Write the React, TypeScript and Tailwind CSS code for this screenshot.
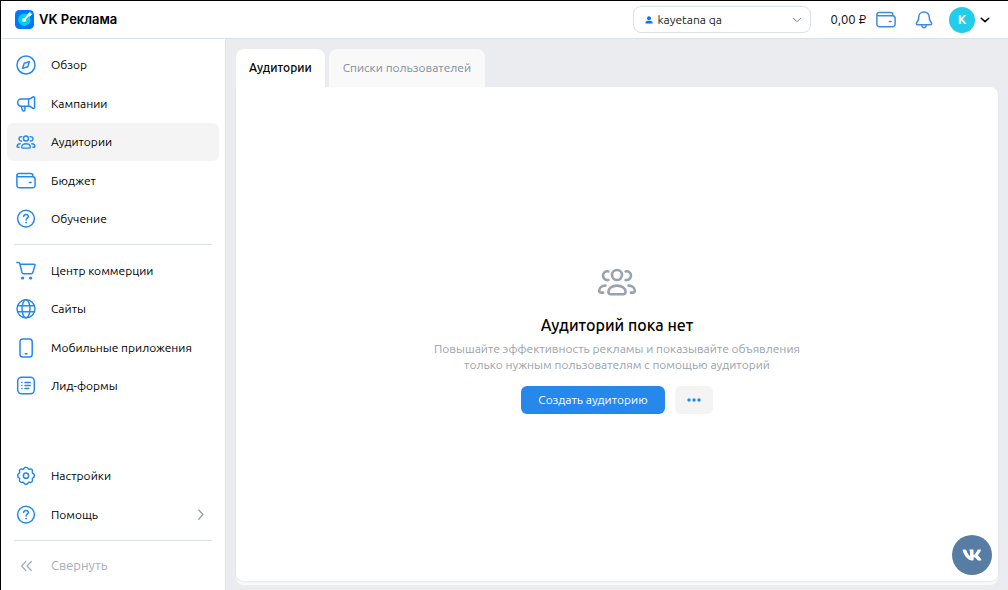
import type { ReactNode } from "react";
import { FaVk } from "react-icons/fa";

type IconProps = { className?: string; children?: ReactNode };

function Glyph({ className = "size-5 stroke-[1.5]", children }: IconProps) {
  return (
    <svg
      viewBox="0 0 20 20"
      className={className}
      fill="none"
      stroke="currentColor"
      strokeLinecap="round"
      strokeLinejoin="round"
      aria-hidden="true"
    >
      {children}
    </svg>
  );
}

const CompassIcon = () => (
  <Glyph>
    <circle cx="10" cy="10" r="9" />
    <path d="M13.4 6.6 11.8 11.8 6.6 13.4 8.2 8.2Z" />
  </Glyph>
);

const MegaphoneIcon = () => (
  <Glyph>
    <path d="M12.6 5H5.2a3.6 3.6 0 0 0 0 7.2h7.4Z" />
    <path d="M12.6 5c1.600 0 3-.9 4-1.900.6-.6 2-.2 2 .7v9.600c0 .9-1.400 1.300-2 .7-1-1-2.400-1.900-4-1.900" />
    <path d="M5.300 12.400l1 3.700a1.100 1.100 0 0 0 1.100.8h.5c.6 0 1-.5 1-1v-3.500" />
  </Glyph>
);

const UsersIcon = ({ className }: { className?: string }) => (
  <Glyph className={className}>
    <circle cx="10" cy="6.500" r="2.500" />
    <path d="M5.700 4.700c-1.500-.3-2.700.7-2.700 2.100s1.200 2.500 2.700 2.200M14.300 4.700c1.500-.3 2.700.7 2.700 2.100s-1.200 2.500-2.700 2.200" />
    <path d="M4.200 11.800c-1.900.1-3.100 1.200-3.100 2.600 0 .6.400.9 1 .9h1M15.800 11.800c1.900.1 3.100 1.200 3.100 2.600 0 .6-.4.9-1 .9h-1" />
    <path d="M10 11.800c-2.600 0-4.300 1.400-4.300 3.100 0 .8.400 1.200 1.200 1.200h6.200c.8 0 1.200-.4 1.200-1.200 0-1.700-1.700-3.100-4.300-3.100Z" />
  </Glyph>
);

const WalletIcon = () => (
  <Glyph>
    <path d="M.9 4.500v9.700a2.600 2.600 0 0 0 2.600 2.600h13a2.600 2.600 0 0 0 2.600-2.600V8.300a2.600 2.600 0 0 0-2.600-2.600H2.800A1.900 1.900 0 0 1 .9 4.200c0-1 .9-1.700 1.900-1.700h12c1.200 0 2 .8 2 1.900v1.100" />
    <path d="M13.300 11.400h1.800" />
  </Glyph>
);

const QuestionIcon = () => (
  <Glyph>
    <circle cx="10" cy="9.600" r="8.400" />
    <path d="M7.700 7.500c.1-1.300 1-2.100 2.300-2.100s2.300.8 2.300 2c0 1.800-2.200 1.800-2.200 3.600" />
    <circle cx="10.100" cy="13.600" r=".9" fill="currentColor" stroke="none" />
  </Glyph>
);

const CartIcon = () => (
  <Glyph>
    <path d="M.9 1.500h1.700c.6 0 1 .4 1.200 1l2.100 8.800c.2.900.9 1.500 1.800 1.500h7.400c.9 0 1.600-.6 1.800-1.400l2.100-7c.2-.7-.2-1.200-.9-1.200H4.100" />
    <circle cx="6.600" cy="17" r="1.600" fill="currentColor" stroke="none" />
    <circle cx="14.600" cy="17" r="1.600" fill="currentColor" stroke="none" />
  </Glyph>
);

const GlobeIcon = () => (
  <Glyph>
    <circle cx="10" cy="9.800" r="9" />
    <ellipse cx="10" cy="9.800" rx="4" ry="9" />
    <path d="M1.800 6.800h16.400M1.800 12.800h16.400" />
  </Glyph>
);

const PhoneIcon = () => (
  <Glyph>
    <rect x="4" y=".9" width="12.200" height="18.200" rx="2.800" />
    <path d="M9.200 15.800h1.800" />
  </Glyph>
);

const FormIcon = () => (
  <Glyph>
    <rect x="1.700" y="1.200" width="16.600" height="16.600" rx="4" />
    <path d="M5.800 6.500h.1M5.800 9.500h.1M5.800 12.500h.1M9 6.500h5.200M9 9.500h5.200M9 12.500h3.600" />
  </Glyph>
);

const GearIcon = () => (
  <Glyph>
    <path d="M8.100 2.300c.8-1.500 3-1.500 3.800 0 .4.800 1.100 1.100 2 .8 1.600-.5 3 .9 2.500 2.500-.3.900 0 1.600.8 2 1.500.8 1.500 3.300 0 4.100-.8.4-1.100 1.100-.8 2 .5 1.700-.9 3.100-2.500 2.600-.9-.3-1.600 0-2 .8-.8 1.500-3 1.500-3.800 0-.4-.8-1.100-1.100-2-.8-1.600.5-3-.9-2.500-2.600.3-.9 0-1.600-.8-2-1.500-.8-1.500-3.300 0-4.100.8-.4 1.100-1.100.8-2-.5-1.600.9-3 2.500-2.500.9.300 1.600 0 2-.8Z" />
    <circle cx="10" cy="9.700" r="2.600" />
  </Glyph>
);

const BellIcon = () => (
  <Glyph>
    <path d="M10 1.900c-3.200 0-5.200 2.300-5.200 5.200 0 2.500-.5 3.500-1.500 4.700-.6.700-1 1.200-1 1.800 0 .7.500 1.100 1.300 1.100h12.800c.8 0 1.300-.4 1.300-1.100 0-.6-.4-1.100-1-1.800-1-1.200-1.500-2.200-1.500-4.700 0-2.900-2-5.200-5.200-5.200Z" />
    <path d="M7.700 15.200c.2 1.600 1.100 2.500 2.300 2.500s2.100-.9 2.300-2.500" />
  </Glyph>
);

function Logo() {
  return (
    <svg viewBox="0 0 19 19" className="size-[19px]" aria-hidden="true">
      <rect width="19" height="19" rx="4.500" fill="#0077ff" />
      <circle cx="9.300" cy="9.700" r="6.200" fill="#00d3e6" />
      <path d="M9.400 9.600 13.800 4.800" stroke="#fff" strokeWidth="2" />
      <path d="M12.200 4.400 15.200 1.400 15.600 3.400 17.600 3.800 14.600 6.800Z" fill="#fff" />
      <circle cx="9.200" cy="9.900" r="2" fill="#fff" />
    </svg>
  );
}

function Chevron({ className }: { className: string }) {
  return (
    <svg viewBox="0 0 10 6" className={className} fill="none" stroke="currentColor" strokeLinecap="round" strokeLinejoin="round" aria-hidden="true">
      <path d="M1.200 1.200 5 4.600 8.800 1.200" />
    </svg>
  );
}

type Item = { label: string; icon: ReactNode; active?: boolean; more?: boolean };

const mainItems: Item[] = [
  { label: "Обзор", icon: <CompassIcon /> },
  { label: "Кампании", icon: <MegaphoneIcon /> },
  { label: "Аудитории", icon: <UsersIcon className="size-5 stroke-[1.400]" />, active: true },
  { label: "Бюджет", icon: <WalletIcon /> },
  { label: "Обучение", icon: <QuestionIcon /> },
];

const toolItems: Item[] = [
  { label: "Центр коммерции", icon: <CartIcon /> },
  { label: "Сайты", icon: <GlobeIcon /> },
  { label: "Мобильные приложения", icon: <PhoneIcon /> },
  { label: "Лид-формы", icon: <FormIcon /> },
];

const serviceItems: Item[] = [
  { label: "Настройки", icon: <GearIcon /> },
  { label: "Помощь", icon: <QuestionIcon />, more: true },
];

function NavList({ items, className }: { items: Item[]; className: string }) {
  return (
    <ul className={`flex flex-col justify-between ${className}`}>
      {items.map((item) => (
        <li key={item.label}>
          <a
            href="#"
            aria-current={item.active ? "page" : undefined}
            className={`flex h-[38px] items-center rounded-md pl-[9px] pr-3 text-black ${item.active ? "bg-[#f4f4f4]" : ""}`}
          >
            <span className="mr-[15px] text-[#2688eb]">{item.icon}</span>
            <span className="flex-1">{item.label}</span>
            {item.more && <Chevron className="w-3 -rotate-90 stroke-[1.2] text-[#99a2ad]" />}
          </a>
        </li>
      ))}
    </ul>
  );
}

export default function App() {
  return (
    <div className="flex min-h-screen flex-col border-l border-t border-black bg-[#ebecf0] font-['Ubuntu','Noto_Sans',sans-serif] text-xs">
      <header className="flex h-[38px] items-center border-b border-[#dce1e6] bg-white pl-[14px] pr-[18px]">
        <a href="#" className="flex items-center gap-[5px] font-['Inter',sans-serif] text-[13px] font-semibold text-black">
          <Logo />
          VK Реклама
        </a>
        <label className="ml-auto flex h-[27px] w-[178px] items-center rounded-lg border border-[#dce1e6] pl-[11px] pr-2">
          <svg viewBox="0 0 8 8" className="mr-1 size-2 fill-[#0077ff]" aria-hidden="true">
            <circle cx="4" cy="2.200" r="2" />
            <path d="M.5 7.500V6.400C.5 5.300 1.500 4.700 4 4.700s3.500.6 3.500 1.700v1.100Z" />
          </svg>
          <select aria-label="Кабинет" className="flex-1 appearance-none bg-transparent text-[#222] outline-none">
            <option>kayetana qa</option>
          </select>
          <Chevron className="w-[10px] text-[#818c99]" />
        </label>
        <span className="ml-[19px] mr-[10px] text-[13px] text-[#111]">0,00 ₽</span>
        <button type="button" aria-label="Пополнить баланс" className="mr-[18px] text-[#3f8ae0]">
          <WalletIcon />
        </button>
        <button type="button" aria-label="Уведомления" className="mr-[15px] text-[#3f8ae0]">
          <BellIcon />
        </button>
        <button type="button" aria-label="Профиль" className="flex items-center gap-[5px] text-black">
          <span className="flex size-[26px] items-center justify-center rounded-full bg-[#21cdea] text-[13px] font-semibold text-white">K</span>
          <Chevron className="w-[10px] stroke-[1.500]" />
        </button>
      </header>

      <div className="flex flex-1">
        <nav className="flex w-[225px] shrink-0 flex-col border-r border-[#dfe1e6] bg-white pb-[5px] pl-[6px] pr-[6px] pt-[7px]">
          <NavList items={mainItems} className="h-48" />
          <hr className="mx-[7px] mb-[7px] mt-[6px] border-[#dce1e6]" />
          <NavList items={toolItems} className="h-[153px]" />
          <NavList items={serviceItems} className="mt-auto h-[77px]" />
          <hr className="mx-[7px] mb-[6px] mt-[6px] border-[#dce1e6]" />
          <button type="button" className="flex h-[38px] items-center pl-[9px] text-[13px] text-[#a6adb8]">
            <svg viewBox="0 0 20 20" className="mr-[15px] size-5" fill="none" stroke="currentColor" strokeWidth="1.300" strokeLinecap="round" strokeLinejoin="round" aria-hidden="true">
              <path d="M9.800 5.500 5.600 10l4.200 4.500M15.300 5.500 11.100 10l4.200 4.500" />
            </svg>
            Свернуть
          </button>
        </nav>

        <main className="flex min-w-0 flex-1 flex-col pb-[5px] pl-[10px] pr-[10px] pt-[10px]">
          <div role="tablist" className="flex gap-1">
            <button type="button" role="tab" aria-selected="true" className="h-[38px] rounded-t-lg bg-white px-[13px] font-medium text-black">
              Аудитории
            </button>
            <button type="button" role="tab" aria-selected="false" className="h-[38px] rounded-t-lg bg-[#f9f9f9] px-[14px] text-[#818c99]">
              Списки пользователей
            </button>
          </div>
          <div className="flex flex-1 flex-col rounded-b-lg rounded-tr-lg bg-[#fafafa] pb-1">
            <section className="flex flex-1 flex-col items-center justify-center rounded-b-lg rounded-tr-lg bg-white pt-2 text-center shadow-[0_1px_2px_rgba(0,0,0,0.08)]">
              <UsersIcon className="size-10 stroke-[1.300] text-[#99a2ad]" />
              <h1 className="mt-[11px] text-base font-medium leading-6 text-black">Аудиторий пока нет</h1>
              <p className="mt-1 leading-4 text-[#99a2ad]">
                Повышайте эффективность рекламы и показывайте объявления
                <br />
                только нужным пользователям с помощью аудиторий
              </p>
              <div className="mt-[13px] flex gap-[10px]">
                <button type="button" className="h-7 rounded-md bg-[#2688eb] px-[17px] text-white">
                  Создать аудиторию
                </button>
                <button type="button" aria-label="Ещё" className="flex h-7 w-[38px] items-center justify-center rounded-md bg-[#f4f4f4] text-[#2688eb]">
                  <svg viewBox="0 0 14 4" className="w-[14px] fill-current" aria-hidden="true">
                    <circle cx="2" cy="2" r="1.700" />
                    <circle cx="7" cy="2" r="1.700" />
                    <circle cx="12" cy="2" r="1.700" />
                  </svg>
                </button>
              </div>
            </section>
          </div>
        </main>
      </div>

      <a href="#" aria-label="ВКонтакте" className="fixed bottom-[15px] right-4 flex size-10 items-center justify-center rounded-full bg-[#587da4] text-white">
        <FaVk className="size-5" />
      </a>
    </div>
  );
}
